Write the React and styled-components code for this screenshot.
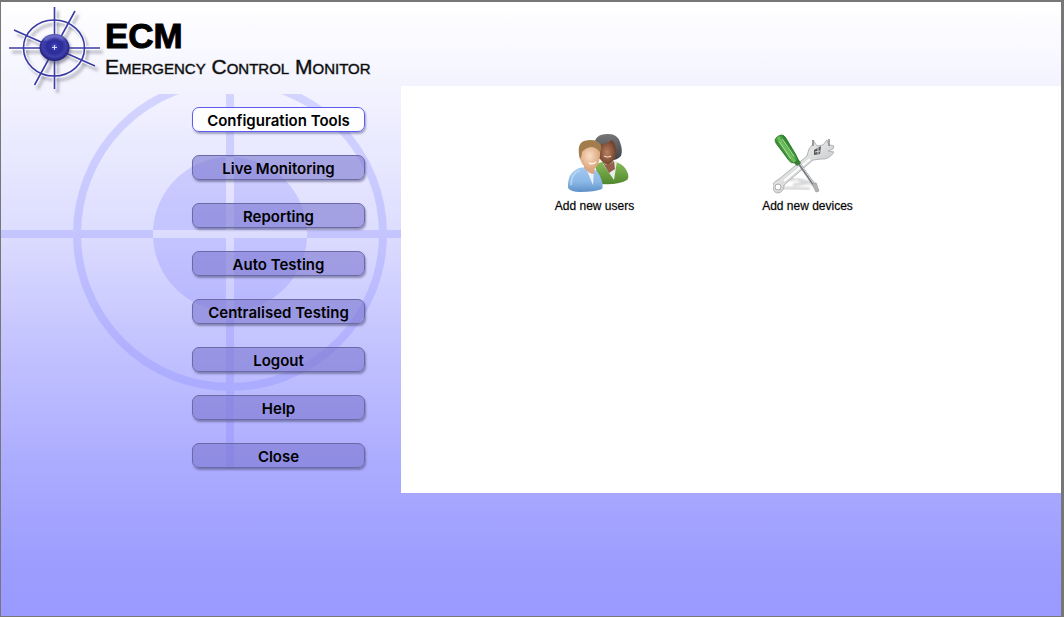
import React from "react";
import styled, { createGlobalStyle, css } from "styled-components";

const GlobalStyle = createGlobalStyle`
  * { box-sizing: border-box; }
  body { margin: 0; font-family: "Liberation Sans", Arial, sans-serif; color: #000; }
`;

const Page = styled.div`
  display: flex;
  flex-direction: column;
  min-height: 100vh;
  border: solid #777;
  border-width: 2px 3px 1px 1px;
  background: linear-gradient(#fff 0%, #f3f3ff 14%, #dcdcff 38%, #c4c4ff 55%, #acacff 75%, #9e9eff 90%, #9999ff 100%);
`;

const Header = styled.header`
  display: flex;
  height: 84px;
  padding-left: 5px;
`;

const LogoArt = styled.svg`
  flex: none;
  width: 99px;
  height: 96px;
`;

const Brand = styled.div`
  display: flex;
  flex-direction: column;
  padding-top: 16px;
`;

const Title = styled.h1`
  margin: 0;
  font-size: 35px;
  line-height: 36px;
  font-weight: 700;
  -webkit-text-stroke: 1px #000;
`;

const Subtitle = styled.p`
  margin: 0;
  font-size: 21px;
  line-height: 26px;
  font-variant: small-caps;
  color: #111;
  -webkit-text-stroke: 1px rgba(0, 0, 0, 0.4);
  white-space: nowrap;
`;

const Body = styled.div`
  display: flex;
  min-height: 407px;
`;

const Sidebar = styled.aside`
  position: relative;
  flex: none;
  width: 400px;
  padding: 21px 36px 25px 191px;
`;

const Watermark = styled.svg`
  position: absolute;
  left: 0;
  top: 8px;
  width: 400px;
  height: 375px;
`;

const Menu = styled.nav`
  position: relative;
  display: flex;
  flex-direction: column;
  gap: 23px;
`;

const MenuButton = styled.button`
  height: 25px;
  padding: 2px 0 0;
  border: 1px solid #6a6aa6;
  border-radius: 7px;
  background: rgba(124, 118, 208, 0.6);
  box-shadow: 1px 2px 2px rgba(70, 70, 110, 0.5);
  font-family: Inter, "Liberation Sans", sans-serif;
  font-size: 15px;
  line-height: 20px;
  font-weight: 600;
  color: #000;
  white-space: nowrap;
  cursor: pointer;
  ${(p) => p.$active && css`
    border-color: #5c5cf0;
    background: rgba(255, 255, 255, 0.9);
    box-shadow: 1px 2px 2px rgba(90, 90, 140, 0.5);
  `}
`;

const Panel = styled.main`
  flex: 1;
  display: flex;
  align-items: flex-start;
  gap: 118px;
  padding: 47px 0 0 146px;
  background: #fff;
`;

const Tool = styled.button`
  display: flex;
  flex-direction: column;
  align-items: center;
  gap: 1px;
  min-width: 95px;
  padding: 0;
  border: 0;
  background: none;
  font-family: inherit;
  font-size: 12px;
  line-height: 16px;
  color: #000;
  -webkit-text-stroke: 1px rgba(0, 0, 0, 0.2);
  white-space: nowrap;
  cursor: pointer;
`;

const ToolArt = styled.svg`
  width: 70px;
  height: 64px;
`;

function Logo() {
  const strokes = (
    <>
      <ellipse cx="48" cy="46" rx="30.500" ry="28" />
      <path d="M48.500 5v82M3 46h91M8 28l81 36M69 9L28.500 83" />
    </>
  );
  return (
    <LogoArt viewBox="0 0 99 96" aria-hidden="true">
      <defs>
        <filter id="soft" x="-20%" y="-20%" width="140%" height="140%"><feGaussianBlur stdDeviation="1.5" /></filter>
        <radialGradient id="ball" cx="50%" cy="46%" r="54%">
          <stop offset="0" stopColor="#6868d0" />
          <stop offset=".2" stopColor="#3434a8" />
          <stop offset=".45" stopColor="#2c2c98" />
          <stop offset=".72" stopColor="#4040ae" />
          <stop offset="1" stopColor="#1c1c74" />
        </radialGradient>
      </defs>
      <g transform="translate(3 4)" fill="none" stroke="#77778a" strokeOpacity=".5" strokeWidth="3" filter="url(#soft)">{strokes}</g>
      <g fill="none" stroke="#fff" strokeOpacity=".8" strokeWidth="4">{strokes}</g>
      <g fill="none" stroke="#3b3ba8" strokeWidth="1.600">{strokes}</g>
      <ellipse cx="50" cy="48" rx="15" ry="14" fill="#444466" opacity=".5" filter="url(#soft)" />
      <ellipse cx="48.500" cy="45.500" rx="15" ry="13.500" fill="url(#ball)" />
      <path d="M38 38q10-8 20-1" fill="none" stroke="#9a9ae6" strokeWidth="3" opacity=".7" filter="url(#soft)" />
      <path d="M48.500 43v5M46 45.500h5" stroke="#d5d5ff" strokeWidth="1" />
    </LogoArt>
  );
}

function TargetMark() {
  return (
    <Watermark viewBox="0 0 400 375" aria-hidden="true">
      <g fill="none" stroke="#8080ff" strokeOpacity=".26" strokeWidth="8">
        <circle cx="229" cy="140" r="153" />
        <path d="M0 140H72M80 140H152M306 140H378M386 140H400M229 0V63M229 217V289M229 297V375" />
      </g>
      <g fill="#8080ff" fillOpacity=".26">
        <path d="M225 136H152A77 77 0 0 1 225 63zM233 136V63A77 77 0 0 1 306 136zM225 144V217A77 77 0 0 1 152 144zM233 144H306A77 77 0 0 1 233 217z" />
      </g>
    </Watermark>
  );
}

function UsersIcon() {
  return (
    <ToolArt viewBox="0 0 70 64" aria-hidden="true">
      <defs>
        <linearGradient id="blue" x2="0" y2="1"><stop stopColor="#a3c9f0" /><stop offset=".6" stopColor="#8ab7e6" /><stop offset="1" stopColor="#5d8fc6" /></linearGradient>
        <linearGradient id="green" x2="0" y2="1"><stop stopColor="#8bbd5b" /><stop offset="1" stopColor="#51882d" /></linearGradient>
        <radialGradient id="fair"><stop stopColor="#f9ddc3" /><stop offset="1" stopColor="#dba77d" /></radialGradient>
        <radialGradient id="dark"><stop stopColor="#b98163" /><stop offset="1" stopColor="#714129" /></radialGradient>
        <linearGradient id="hair" x2="0" y2="1"><stop stopColor="#777779" /><stop offset="1" stopColor="#404146" /></linearGradient>
      </defs>
      <g transform="translate(1 -1)">
        <path d="M34 34q3-4 12-5q17 0 21 13q1 4-1 6q-7 5-27 4z" fill="url(#green)" />
        <path d="M42 32l14-3l-3 19z" fill="#e9eee7" />
        <path d="M33 13Q34 2 46 2Q56 1 59 10Q62 18 60 24Q56 28 52 28Q42 30 36 25z" fill="url(#hair)" />
        <path d="M37 13q9-1 14-5q4 4 4 11q0 10-8 14q-8-3-10-11z" fill="url(#dark)" />
        <path d="M42 31q5 4 11-2l1 8l-6 4z" fill="#94604a" />
        <path d="M43 24q4 2 7 0" fill="none" stroke="#f3ddd0" strokeWidth="1.200" />
      </g>
      <path d="M8 55Q7 40 19 35q16-3 21 8q4 9 2 13q-7 3-22 3q-9 0-12-4z" fill="url(#blue)" />
      <path d="M25 33l9 2l-1 17z" fill="#edf3fa" />
      <path d="M24 32q6 4 11 0l-1 9q-5 0-10-6z" fill="#d9a785" />
      <path d="M20 18q2-8 11-8q10 0 9 12q-1 14-9 14q-9 0-12-14z" fill="url(#fair)" />
      <path d="M20 26Q16 11 24 8q12-3 17 4q1 4-1 7q-4-5-9-5q-6 1-9 5q0 4-2 7z" fill="#a37c4e" />
      <path d="M29 30q4 2 7-1" fill="none" stroke="#fff1e7" strokeWidth="1.500" />
      <path d="M11 52q0-12 9-15" fill="none" stroke="#bfdcf7" strokeWidth="2" opacity=".7" />
    </ToolArt>
  );
}

function DevicesIcon() {
  return (
    <ToolArt viewBox="6 1 70 64" aria-hidden="true">
      <defs>
        <linearGradient id="metal" x2="1" y2="1"><stop stopColor="#f8f8f8" /><stop offset=".5" stopColor="#dcdddd" /><stop offset="1" stopColor="#aaadaf" /></linearGradient>
        <linearGradient id="grip" x2="1" y2="0"><stop stopColor="#237b24" /><stop offset=".45" stopColor="#72c25f" /><stop offset="1" stopColor="#1e7622" /></linearGradient>
        <filter id="haze"><feGaussianBlur stdDeviation="1" /></filter>
      </defs>
      <path d="M11 48l18-1M26 53l20-3M30 47l20 6M15 56l28 1" stroke="#bbb" strokeWidth="3" opacity=".6" filter="url(#haze)" />
      <path d="M6 56Q5 50 11 48L40 24Q41 16 46 12L46 8L50 14L56 13L60 8Q61 13 63 13L67 14L66 17L61 19L67 20Q62 28 54 27L46 28L17 53Q17 60 11 61Q7 61 6 56z" fill="url(#metal)" stroke="#b2b4b6" strokeWidth="1" />
      <path d="M17 49L43 27" stroke="#fff" strokeWidth="2" />
      <circle cx="11" cy="55" r="3" fill="#fff" stroke="#aaa" />
      <path d="M47 18l7-4l-1 8l-6 1z" fill="#56595d" />
      <path d="M48 20l5-1M51 15v7" stroke="#d8d8d8" />
      <path d="M46 8v6M62 7v7" stroke="#888" strokeWidth="1.500" />
      <path d="M31 30L47 53" stroke="#777b80" strokeWidth="3" />
      <path d="M32 30L47 52" stroke="#e0e2e4" strokeWidth="1" />
      <path d="M45 52l4-1l3 8l-3 1z" fill="#b1b4b7" stroke="#999" strokeWidth=".7" />
      <path d="M25 29l5-4l4 6l-4 3z" fill="#397d38" />
      <g transform="translate(-1 2) rotate(-34 20 15)">
        <path d="M15 5Q15 0 20 0Q26 0 26 5L25 25Q25 30 22 31H19Q16 30 16 26z" fill="url(#grip)" stroke="#2b7a2d" strokeWidth=".8" />
        <path d="M18.500 5v21M22.500 5v21" stroke="#b4e5a2" strokeWidth=".8" />
      </g>
    </ToolArt>
  );
}

const menuItems = [
  "Configuration Tools", "Live Monitoring", "Reporting", "Auto Testing",
  "Centralised Testing", "Logout", "Help", "Close",
];

export default function App() {
  return (
    <>
      <GlobalStyle />
      <Page>
        <Header>
          <Logo />
          <Brand>
            <Title>ECM</Title>
            <Subtitle>Emergency Control Monitor</Subtitle>
          </Brand>
        </Header>
        <Body>
          <Sidebar>
            <TargetMark />
            <Menu>
              {menuItems.map((item, i) => (
                <MenuButton key={item} type="button" $active={i === 0}>{item}</MenuButton>
              ))}
            </Menu>
          </Sidebar>
          <Panel>
            <Tool type="button"><UsersIcon />Add new users</Tool>
            <Tool type="button"><DevicesIcon />Add new devices</Tool>
          </Panel>
        </Body>
      </Page>
    </>
  );
}
